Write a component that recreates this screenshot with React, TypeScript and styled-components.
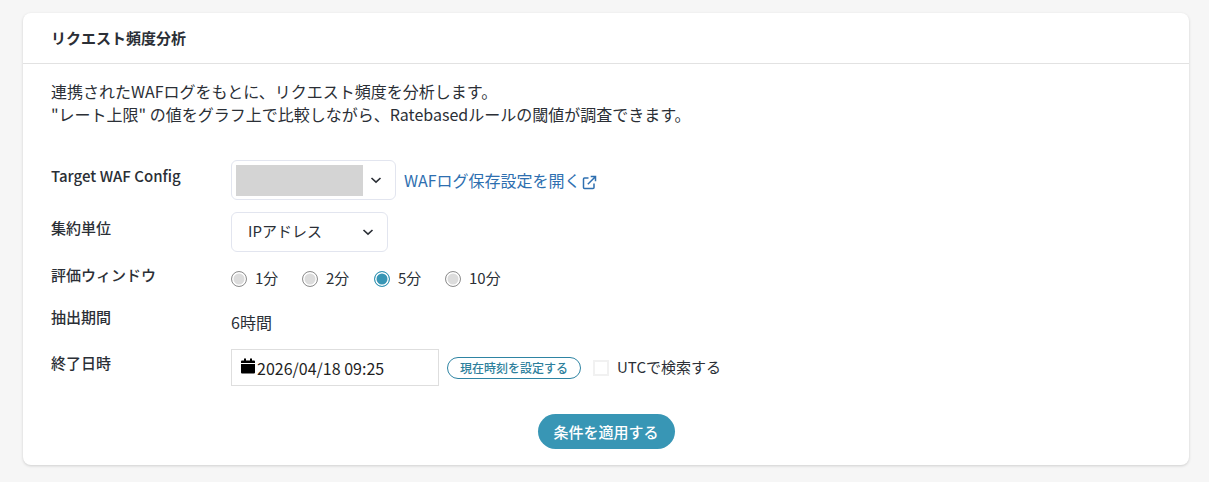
import styled, { createGlobalStyle } from 'styled-components';

const GlobalStyle = createGlobalStyle`
  html, body {
    margin: 0;
    padding: 0;
    background: #f6f6f6;
  }
  body {
    font-family: "Noto Sans CJK JP", "Noto Sans", sans-serif;
    color: #2b2f36;
  }
`;

const windows = [
  { label: '1分', width: 71 },
  { label: '2分', width: 72 },
  { label: '5分', width: 71 },
  { label: '10分', width: 60 },
];

const ChevronIcon = () => (
  <svg width="12" height="12" viewBox="0 0 12 12" fill="none">
    <path d="M1.5 4l4.5 4.2L10.500 4" stroke="#2b2f36" strokeWidth="1.6" />
  </svg>
);

const ExternalIcon = () => (
  <LinkIconSvg width="15" height="15" viewBox="0 0 15 15" fill="none" stroke="#2e6fb0" strokeWidth="1.5">
    <path d="M6.500 3H2.500A1 1 0 0 0 1.500 4v8.500a1 1 0 0 0 1 1H11a1 1 0 0 0 1-1V8.500" />
    <path d="M5.800 9.200L13.300 1.700M8.700 1.500h4.800v4.800" />
  </LinkIconSvg>
);

const CalendarIcon = () => (
  <svg width="14" height="16" viewBox="0 0 14 16" fill="#000">
    <path d="M3 0.500h2v2h4v-2h2v2h2a1 1 0 0 1 1 1V5H0V3.500a1 1 0 0 1 1-1h2zM0 6h14v8.500a1 1 0 0 1-1 1H1a1 1 0 0 1-1-1z" />
  </svg>
);

const App = () => {
  return (
    <Page>
      <GlobalStyle />
      <Card>
        <CardHeader>リクエスト頻度分析</CardHeader>
        <CardBody>
          <Description>
            連携されたWAFログをもとに、リクエスト頻度を分析します。
            <br />
            "レート上限" の値をグラフ上で比較しながら、Ratebasedルールの閾値が調査できます。
          </Description>
          <Form>
            <Row $height={40} $gap={12}>
              <Label $offset={-5}>Target WAF Config</Label>
              <Control>
                <ConfigSelect>
                  <Masked />
                  <ChevronIcon />
                </ConfigSelect>
                <ExternalLink>
                  WAFログ保存設定を開く
                  <ExternalIcon />
                </ExternalLink>
              </Control>
            </Row>
            <Row $height={40} $gap={11}>
              <Label $offset={-5}>集約単位</Label>
              <Control>
                <UnitSelect>
                  <RaisedText>IPアドレス</RaisedText>
                  <ChevronIcon />
                </UnitSelect>
              </Control>
            </Row>
            <Row $height={32} $gap={12}>
              <Label $offset={-5}>評価ウィンドウ</Label>
              <Control>
                {windows.map((w) => (
                  <RadioItem key={w.label} $width={w.width}>
                    <Radio $checked={w.label === '5分'} />
                    <RaisedText>{w.label}</RaisedText>
                  </RadioItem>
                ))}
              </Control>
            </Row>
            <Row $height={32} $gap={10}>
              <Label $offset={-7}>抽出期間</Label>
              <PlainValue>6時間</PlainValue>
            </Row>
            <Row $height={37} $gap={28}>
              <Label $offset={-5}>終了日時</Label>
              <Control>
                <DateInput>
                  <CalendarIcon />
                  <span>2026/04/18 09:25</span>
                </DateInput>
                <NowButton>現在時刻を設定する</NowButton>
                <Checkbox />
                <CheckLabel>UTCで検索する</CheckLabel>
              </Control>
            </Row>
          </Form>
          <Actions>
            <ApplyButton>条件を適用する</ApplyButton>
          </Actions>
        </CardBody>
      </Card>
    </Page>
  );
};

const Page = styled.div`
  width: 1209px;
  height: 482px;
  padding: 13px 20px 17px 23px;
  box-sizing: border-box;
  overflow: hidden;
`;

const Card = styled.section`
  height: 452px;
  background: #fff;
  border-radius: 8px;
  box-shadow: 0 1px 3px rgba(0, 0, 0, 0.16);
`;

const CardHeader = styled.h2`
  margin: 0;
  height: 51px;
  box-sizing: border-box;
  padding-left: 28px;
  border-bottom: 1px solid #e2e2e2;
  font-size: 15px;
  font-weight: 700;
  line-height: 49px;
`;

const CardBody = styled.div`
  padding: 16px 28px 0;
`;

const Description = styled.p`
  margin: 0 0 34px;
  font-size: 16px;
  line-height: 23px;
`;

const Form = styled.div`
  display: flex;
  flex-direction: column;
`;

const Row = styled.div<{ $height: number; $gap: number }>`
  display: flex;
  align-items: center;
  height: ${({ $height }) => $height}px;
  margin-bottom: ${({ $gap }) => $gap}px;
`;

const Label = styled.div<{ $offset: number }>`
  width: 180px;
  flex: none;
  font-size: 15px;
  font-weight: 500;
  transform: translateY(${({ $offset }) => $offset}px);
`;

const Control = styled.div`
  display: flex;
  align-items: center;
  font-size: 15px;
`;

const RaisedText = styled.span`
  margin-bottom: 3px;
`;

const PlainValue = styled.div`
  margin-bottom: 2px;
  font-size: 16px;
`;

const ConfigSelect = styled.div`
  width: 165px;
  height: 40px;
  box-sizing: border-box;
  display: flex;
  align-items: center;
  justify-content: space-between;
  padding: 0 13px 0 4px;
  border: 1px solid #e2e5ef;
  border-radius: 6px;
`;

const Masked = styled.div`
  width: 127px;
  height: 31px;
  background: #d4d4d4;
`;

const ExternalLink = styled.a`
  display: flex;
  align-items: center;
  gap: 1px;
  margin-left: 8px;
  color: #2e6fb0;
  font-size: 16px;
`;

const LinkIconSvg = styled.svg`
  transform: translateY(2px);
`;

const UnitSelect = styled.div`
  width: 157px;
  height: 40px;
  box-sizing: border-box;
  display: flex;
  align-items: center;
  justify-content: space-between;
  padding: 0 13px 0 16px;
  border: 1px solid #e2e5ef;
  border-radius: 6px;
  font-size: 15px;
`;

const RadioItem = styled.label<{ $width: number }>`
  width: ${({ $width }) => $width}px;
  display: flex;
  align-items: center;
  gap: 8px;
  font-size: 15px;
`;

const Radio = styled.span<{ $checked?: boolean }>`
  width: 16px;
  height: 16px;
  box-sizing: border-box;
  margin-bottom: 1px;
  border-radius: 50%;
  border: 1px solid ${({ $checked }) => ($checked ? '#3896b5' : '#8f8f8f')};
  background: ${({ $checked }) => ($checked ? '#3896b5' : '#dcdcdc')};
  box-shadow: inset 0 0 0 1.500px #fff;
`;

const DateInput = styled.div`
  width: 208px;
  height: 37px;
  box-sizing: border-box;
  display: flex;
  align-items: center;
  gap: 2px;
  padding-left: 9px;
  border: 1px solid #dedede;
  color: #1f1f1f;
  font-size: 16px;

  svg {
    transform: translateY(-2px);
  }
`;

const NowButton = styled.button`
  height: 22px;
  width: 134px;
  margin-left: 8px;
  padding: 0;
  box-sizing: border-box;
  background: #fff;
  border: 1px solid #2e84a3;
  border-radius: 11px;
  color: #2e7f9c;
  font-family: inherit;
  font-size: 12px;
  font-weight: 500;
`;

const Checkbox = styled.span`
  width: 16px;
  height: 16px;
  box-sizing: border-box;
  margin-left: 12px;
  border: 2px solid #f1f1f1;
  background: #fff;
`;

const CheckLabel = styled.span`
  margin-left: 8px;
  margin-bottom: 2px;
  font-size: 15px;
`;

const Actions = styled.div`
  display: flex;
  justify-content: center;
`;

const ApplyButton = styled.button`
  width: 137px;
  height: 35px;
  padding: 0;
  background: #3896b5;
  border: none;
  border-radius: 18px;
  color: #fff;
  font-family: inherit;
  font-size: 15px;
  font-weight: 500;
`;

export default App;
